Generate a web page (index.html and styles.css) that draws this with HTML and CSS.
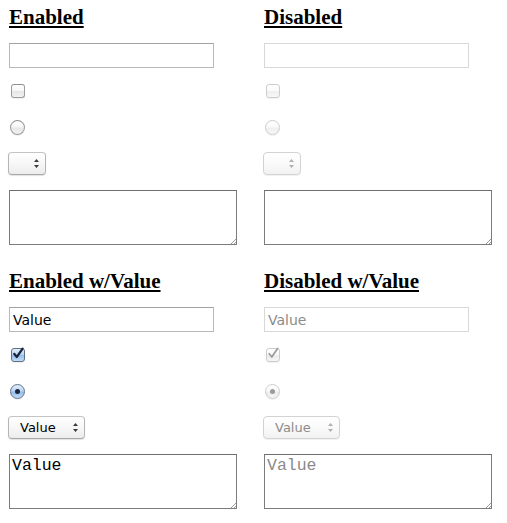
FILE: index.html
```html
<!DOCTYPE html>
<html>
<head>
<meta charset="utf-8">
<title>Form controls</title>
<link rel="stylesheet" href="styles.css">
</head>
<body>
<div class="grid">
  <section class="col">
    <h2 class="title">Enabled</h2>
    <input class="field" type="text" value="">
    <span class="cb"></span>
    <span class="rb"></span>
    <span class="sel sel-empty"><select class="sel-input"></select><svg class="arrows" width="5" height="9" viewBox="0 0 5 9"><path d="M2.5 0 L5 3 H0 Z M0 6 H5 L2.5 9 Z"/></svg></span>
    <span class="area"><textarea class="area-input"></textarea><svg class="grip" width="6" height="6" viewBox="0 0 6 6"><path d="M6 1 L1 6 M6 4 L4 6"/></svg></span>
  </section>
  <section class="col">
    <h2 class="title">Disabled</h2>
    <input class="field" type="text" value="" disabled>
    <span class="cb is-disabled"></span>
    <span class="rb is-disabled"></span>
    <span class="sel sel-empty is-disabled"><select class="sel-input" disabled></select><svg class="arrows" width="5" height="9" viewBox="0 0 5 9"><path d="M2.5 0 L5 3 H0 Z M0 6 H5 L2.5 9 Z"/></svg></span>
    <span class="area"><textarea class="area-input" disabled></textarea><svg class="grip" width="6" height="6" viewBox="0 0 6 6"><path d="M6 1 L1 6 M6 4 L4 6"/></svg></span>
  </section>
  <section class="col">
    <h2 class="title">Enabled w/Value</h2>
    <input class="field" type="text" value="Value">
    <span class="cb is-checked"><svg class="tick" width="14" height="14" viewBox="0 0 14 14"><path d="M3.2 6.8 L5.8 10 L11.6 1.6"/></svg></span>
    <span class="rb is-checked"><span class="dot"></span></span>
    <span class="sel sel-value"><select class="sel-input"><option>Value</option></select><svg class="arrows" width="5" height="9" viewBox="0 0 5 9"><path d="M2.5 0 L5 3 H0 Z M0 6 H5 L2.5 9 Z"/></svg></span>
    <span class="area"><textarea class="area-input">Value</textarea><svg class="grip" width="6" height="6" viewBox="0 0 6 6"><path d="M6 1 L1 6 M6 4 L4 6"/></svg></span>
  </section>
  <section class="col">
    <h2 class="title">Disabled w/Value</h2>
    <input class="field" type="text" value="Value" disabled>
    <span class="cb is-checked is-disabled"><svg class="tick" width="14" height="14" viewBox="0 0 14 14"><path d="M3.2 6.8 L5.8 10 L11.6 1.6"/></svg></span>
    <span class="rb is-checked is-disabled"><span class="dot"></span></span>
    <span class="sel sel-value is-disabled"><select class="sel-input" disabled><option>Value</option></select><svg class="arrows" width="5" height="9" viewBox="0 0 5 9"><path d="M2.5 0 L5 3 H0 Z M0 6 H5 L2.5 9 Z"/></svg></span>
    <span class="area"><textarea class="area-input" disabled>Value</textarea><svg class="grip" width="6" height="6" viewBox="0 0 6 6"><path d="M6 1 L1 6 M6 4 L4 6"/></svg></span>
  </section>
</div>
</body>
</html>
```
FILE: styles.css
```css
html, body {
  margin: 0;
  padding: 0;
  background: #ffffff;
}

body {
  padding: 0 8px;
  font-family: "DejaVu Sans", "Liberation Sans", sans-serif;
  color: #000;
}

.grid {
  display: grid;
  grid-template-columns: 255px 255px;
  grid-auto-rows: 264px;
}

.col {
  display: flex;
  flex-direction: column;
  align-items: flex-start;
}

.title {
  margin: 6px 0 0 1px;
  font-family: "Liberation Serif", "Times New Roman", serif;
  font-weight: bold;
  font-size: 21px;
  line-height: 23px;
  height: 23px;
  text-decoration: underline;
  text-decoration-thickness: 2px;
  text-underline-offset: 2px;
}

/* text field */
.field {
  box-sizing: border-box;
  margin: 14px 0 0 1px;
  width: 205px;
  height: 25px;
  padding: 1px 3px 0 3px;
  border: 1px solid #b9b9b9;
  border-top-color: #a2a2a2;
  border-radius: 0;
  background: #fff;
  font-family: "DejaVu Sans", sans-serif;
  font-size: 14px;
  color: #000;
  outline: none;
}
.field:disabled {
  border-color: #d8d8d8;
  color: #8c8c8c;
  background: #fff;
  -webkit-text-fill-color: #8c8c8c;
}

/* checkbox */
.cb {
  position: relative;
  box-sizing: border-box;
  display: block;
  margin: 16px 0 0 3px;
  width: 14px;
  height: 14px;
  border: 1px solid #9c9c9c;
  border-top-color: #8f8f8f;
  border-radius: 3px;
  background: linear-gradient(#ffffff, #f6f6f6 48%, #e6e6e6 52%, #f2f2f2);
  box-shadow: 0 1px 1px rgba(0, 0, 0, 0.06);
}
.cb.is-disabled {
  border-color: #cdcdcd;
  background: linear-gradient(#ffffff, #fafafa 48%, #efefef 52%, #f7f7f7);
}
.cb.is-checked {
  border-color: #5f6f84;
  background: linear-gradient(#e3effc, #b7d3f3 48%, #93bdec 52%, #c1dcf7);
}
.cb.is-checked.is-disabled {
  border-color: #cdcdcd;
  background: linear-gradient(#ffffff, #f8f8f8 48%, #ececec 52%, #f5f5f5);
}
.tick {
  position: absolute;
  left: -1px;
  top: -2px;
  overflow: visible;
}
.tick path {
  fill: none;
  stroke: #18243a;
  stroke-width: 2.2;
  stroke-linecap: round;
  stroke-linejoin: round;
}
.is-disabled .tick path {
  stroke: #9d9d9d;
  stroke-width: 1.8;
}

/* radio */
.rb {
  position: relative;
  box-sizing: border-box;
  display: block;
  margin: 22px 0 0 2px;
  width: 15px;
  height: 15px;
  border: 1px solid #9c9c9c;
  border-top-color: #8f8f8f;
  border-radius: 50%;
  background: linear-gradient(#ffffff, #f6f6f6 48%, #e6e6e6 52%, #f2f2f2);
  box-shadow: 0 1px 1px rgba(0, 0, 0, 0.06);
}
.rb.is-disabled {
  border-color: #cdcdcd;
  background: linear-gradient(#ffffff, #fafafa 48%, #efefef 52%, #f7f7f7);
}
.rb.is-checked {
  border-color: #62728a;
  background: linear-gradient(#e3effc, #b7d3f3 48%, #93bdec 52%, #c1dcf7);
}
.rb.is-checked.is-disabled {
  border-color: #cdcdcd;
  background: linear-gradient(#ffffff, #f8f8f8 48%, #ececec 52%, #f5f5f5);
}
.dot {
  position: absolute;
  left: 4px;
  top: 4px;
  width: 5px;
  height: 5px;
  border-radius: 50%;
  background: #1b2638;
}
.is-disabled .dot {
  background: #9a9a9a;
}

/* select */
.sel {
  position: relative;
  box-sizing: border-box;
  display: block;
  margin: 17px 0 0 0;
  height: 23px;
  border: 1px solid #b5b5b5;
  border-top-color: #c4c4c4;
  border-bottom-color: #a8a8a8;
  border-radius: 4px;
  background: linear-gradient(#ffffff, #f7f7f7 50%, #ececec);
  box-shadow: 0 1px 1px rgba(0, 0, 0, 0.12);
}
.sel-empty { width: 38px; }
.sel-value { width: 77px; }
.sel.is-disabled {
  border-color: #d3d3d3;
  background: linear-gradient(#ffffff, #fafafa 50%, #f2f2f2);
  box-shadow: 0 1px 1px rgba(0, 0, 0, 0.06);
}
.sel-input {
  -webkit-appearance: none;
  appearance: none;
  display: block;
  width: 100%;
  height: 100%;
  margin: 0;
  padding: 0 0 0 11px;
  border: 0;
  background: transparent;
  font-family: "DejaVu Sans", sans-serif;
  font-size: 13px;
  line-height: 21px;
  color: #000;
  opacity: 1;
  outline: none;
}
.sel-input:disabled {
  color: #8c8c8c;
}
.arrows {
  position: absolute;
  right: 6px;
  top: 6px;
  fill: #3a3a3a;
}
.is-disabled .arrows {
  fill: #b0b0b0;
}

/* textarea */
.area {
  position: relative;
  display: block;
  margin: 15px 0 0 1px;
  width: 228px;
  height: 55px;
}
.area-input {
  box-sizing: border-box;
  display: block;
  width: 100%;
  height: 100%;
  margin: 0;
  padding: 1px 2px 0;
  border: 1px solid #7c7c7c;
  border-top-color: #6f6f6f;
  border-radius: 0;
  background: #fff;
  resize: none;
  font-family: "Liberation Mono", "Courier New", monospace;
  font-size: 16.5px;
  line-height: 19px;
  color: #000;
  outline: none;
}
.area-input:disabled {
  color: #8a8a8a;
  -webkit-text-fill-color: #8a8a8a;
  background: #fff;
}
.grip {
  position: absolute;
  right: 1px;
  bottom: 1px;
  fill: none;
  stroke: #9a9a9a;
  stroke-width: 1;
}
```
